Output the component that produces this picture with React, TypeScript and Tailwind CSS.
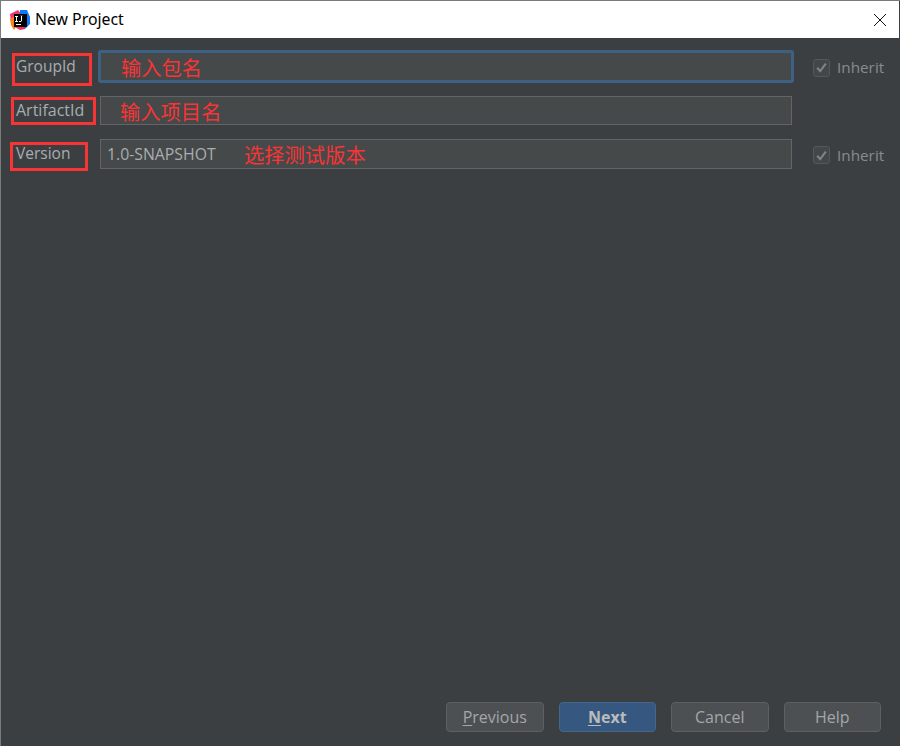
function Logo() {
  return (
    <svg width="20" height="20" viewBox="0 0 20 20" className="shrink-0">
      <path d="M0 4 L8 0 L12 5 L5 14 L1 12 Z" fill="#f0366a" />
      <path d="M0 9 L5 6 L8 14 L4 20 L1 15 Z" fill="#fc801d" />
      <path d="M10 0 L17 0 L20 7 L20 14 L15 19 L9 18 Z" fill="#087cfa" />
      <path d="M3 16 L10 20 L15 19 L12 12 Z" fill="#fe2857" />
      <rect x="4" y="4" width="13" height="13" fill="#000" />
      <rect x="6" y="14" width="5" height="1" fill="#fff" />
      <rect x="6" y="6" width="1" height="6" fill="#fff" />
      <rect x="5" y="6" width="3" height="1" fill="#fff" />
      <rect x="5" y="11" width="3" height="1" fill="#fff" />
      <path d="M9 11 H11 V6 H10 V5.8 H13 V6 H12 V10.5 L11 12 H9 Z" fill="#fff" />
    </svg>
  );
}

function Inherit() {
  return (
    <div className="flex items-center w-[71px] h-[18px] gap-[7px] text-[15.3px] text-[#858c91] mt-[2px]">
      <span className="w-[17px] h-[18px] shrink-0 rounded-[3px] border border-[#555759] bg-[#43474a] flex items-center justify-center">
        <svg width="15" height="15" viewBox="0 0 14 14">
          <path d="M3 7.2 L5.8 10.4 L11 3.4" fill="none" stroke="#7f8386" strokeWidth="2" />
        </svg>
      </span>
      <span>Inherit</span>
    </div>
  );
}

function Button({ children, primary }: { children: React.ReactNode; primary?: boolean }) {
  return (
    <button
      className={
        primary
          ? "w-[97.5px] h-[30px] rounded-[4px] border border-[#43688c] bg-[#365880] text-[#bbbbbb] text-[16px] font-bold"
          : "w-[97.5px] h-[30px] rounded-[4px] border border-[#5e6060] bg-[#4c5052] text-[#a3a7a9] text-[16px]"
      }
    >
      {children}
    </button>
  );
}

const cjk = { fontFamily: '"Noto Sans CJK SC", sans-serif' };

export default function App() {
  return (
    <div
      className="relative w-[900px] h-[746px] overflow-hidden flex flex-col border-t border-l border-[#7a7a7a] bg-[#3c3f41]"
      style={{ fontFamily: '"Open Sans", "Noto Sans", "Noto Sans CJK SC", sans-serif' }}
    >
      <div className="h-[37px] shrink-0 bg-white flex items-center pl-[9px] pr-[12px] mr-px">
        <Logo />
        <span className="ml-[5px] text-[15.8px] text-black" style={{ fontFamily: '"Noto Sans", sans-serif' }}>New Project</span>
        <svg width="14" height="14" viewBox="0 0 14 14" className="ml-auto mt-[1px]">
          <path d="M1 1 L13 13 M13 1 L1 13" stroke="#111" strokeWidth="1" fill="none" />
        </svg>
      </div>

      <div className="flex-1 flex flex-col">
        <div className="flex flex-col pt-[14px]">
          <div className="flex items-center h-[29px] pl-[15px]">
            <span className="w-[84px] text-[15.5px] text-[#a9adaf] mt-[1px]">GroupId</span>
            <div className="w-[696px] h-[33px] shrink-0 rounded-[3px] border-[3px] border-[#3d6185] bg-[#45494a] -ml-[2px] mr-[19px]"></div>
            <Inherit />
          </div>
          <div className="flex items-center h-[29px] mt-[15px] pl-[15px]">
            <span className="w-[84px] text-[16px] text-[#a9adaf] -mt-[2px]">ArtifactId</span>
            <div className="w-[692px] h-[29px] shrink-0 border border-[#646464] bg-[#45494a]"></div>
          </div>
          <div className="flex items-center h-[30px] mt-[14px] pl-[15px]">
            <span className="w-[84px] text-[15.5px] text-[#a9adaf] -mt-[1px]">Version</span>
            <div className="w-[692px] h-[30px] shrink-0 border border-[#646464] bg-[#45494a] mr-[21px] pl-[6px] pt-[1px] flex items-center text-[15.8px] text-[#a9adaf]">
              1.0-SNAPSHOT
            </div>
            <Inherit />
          </div>
        </div>

        <div className="mt-auto mb-[14px] flex justify-end gap-[15px] pr-[19px]">
          <Button><span className="underline underline-offset-2">P</span>revious</Button>
          <Button primary><span className="underline underline-offset-2">N</span>ext</Button>
          <Button>Cancel</Button>
          <Button>Help</Button>
        </div>
      </div>

      <div className="absolute left-[11px] top-[52px] w-[80px] h-[33px] border-[3px] border-[#f83434]"></div>
      <div className="absolute left-[10px] top-[96px] w-[85px] h-[28px] border-[3px] border-[#f83434]"></div>
      <div className="absolute left-[9px] top-[141px] w-[78px] h-[29px] border-[3px] border-[#f83434]"></div>

      <span className="absolute left-[120px] top-[52px] text-[20.3px] leading-[28px] text-[#f83434]" style={cjk}>输入包名</span>
      <span className="absolute left-[119px] top-[96px] text-[20.3px] leading-[28px] text-[#f83434]" style={cjk}>输入项目名</span>
      <span className="absolute left-[243px] top-[139px] text-[20.3px] leading-[28px] text-[#f83434]" style={cjk}>选择测试版本</span>
    </div>
  );
}
